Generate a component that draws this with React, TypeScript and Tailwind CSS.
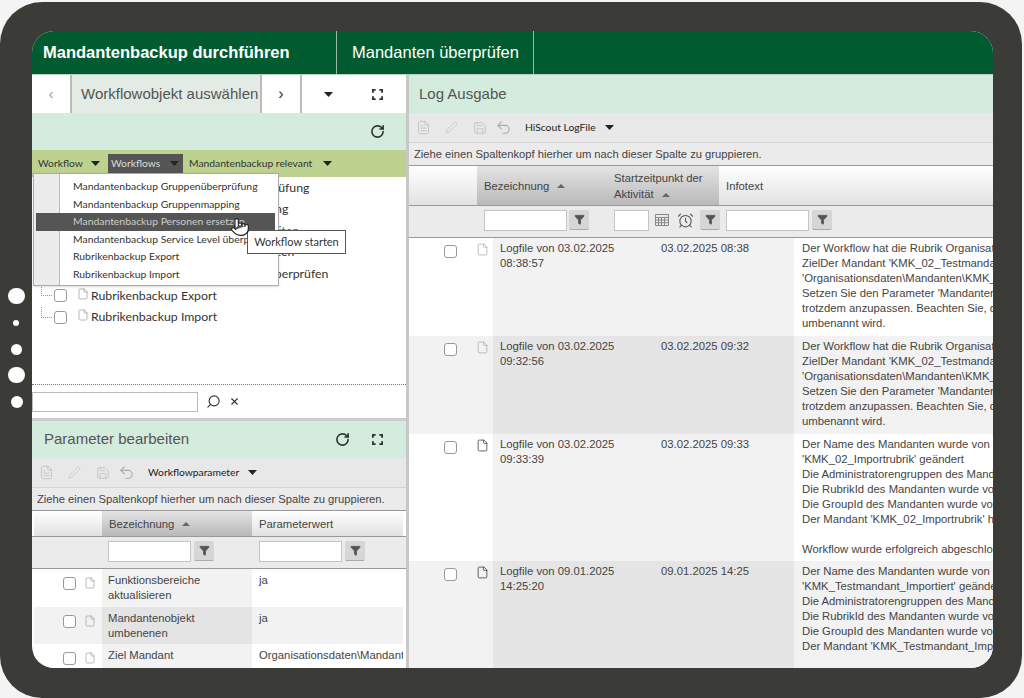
import { AlarmClock, File, FileText, Funnel, Pen, Pointer, RotateCw, Save, Search, Undo2, X } from "lucide-react"

const caret = (
  <svg width="9" height="5" viewBox="0 0 9 5" className="shrink-0">
    <path d="M0 0h9L4.5 5z" fill="#222" />
  </svg>
)

function SortUp() {
  return (
    <svg width="8" height="4" viewBox="0 0 8 4" className="ml-2 inline-block align-middle">
      <path d="M0 4h8L4 0z" fill="#666" />
    </svg>
  )
}

function Corners() {
  return (
    <svg width="11" height="11" viewBox="0 0 12 12" fill="none" stroke="#333" strokeWidth="2">
      <path d="M1 4V1h3M8 1h3v3M11 8v3H8M4 11H1V8" />
    </svg>
  )
}

function Check() {
  return <span className="block h-[13px] w-[13px] shrink-0 rounded-[3px] border border-[#999] bg-white" />
}

function FilterBtn() {
  return (
    <span className="flex h-[20px] w-[20px] shrink-0 items-center justify-center rounded-[2px] border-b border-[#aaa] bg-[#d6d6d6]">
      <Funnel size={11} fill="#555" stroke="#555" />
    </span>
  )
}

function FilterInput({ width }: { width: string }) {
  return <span className={`block h-[21px] ${width} shrink-0 border border-[#c4c4c4] bg-white`} />
}

function Toolbar({ label }: { label: string }) {
  return (
    <div className="flex h-[30px] shrink-0 items-center border-b border-[#d4d4d4] bg-[#e8e8e8] pl-[7px] text-[#c4c4c4]">
      <FileText size={15} strokeWidth={1.5} />
      <Pen size={13} strokeWidth={1.3} className="ml-[14px]" />
      <Save size={14} strokeWidth={1.5} className="ml-[15px]" />
      <Undo2 size={17} strokeWidth={1.5} className="ml-[8px] text-[#aaa]" />
      <span className="ml-[13px] font-['Lato',sans-serif] text-[10.3px] text-[#222]">{label}</span>
      <span className="ml-[9px]">{caret}</span>
    </div>
  )
}

function GroupHint() {
  return (
    <div className="flex h-[23px] shrink-0 items-center whitespace-nowrap border-b border-[#999] bg-[#ebebeb] pl-[5px] text-[11.2px] text-[#444]">
      Ziehe einen Spaltenkopf hierher um nach dieser Spalte zu gruppieren.
    </div>
  )
}

const headCell = "flex shrink-0 items-center bg-gradient-to-b from-white to-[#e2e2e2] pl-[7px] pt-[1px]"
const sortedCell = "flex shrink-0 items-center bg-gradient-to-b from-[#e4e4e4] to-[#b9b9b9] pl-[7px] pt-[1px]"

const treeNames = [
  "Mandantenbackup Gruppenüberprüfung",
  "Mandantenbackup Gruppenmapping",
  "Mandantenbackup Objekte bearbeiten",
  "Mandantenbackup Personen ersetzen",
  "Mandantenbackup Service Level überprüfen",
  "Rubrikenbackup Export",
  "Rubrikenbackup Import",
]

const menuItems = [
  "Mandantenbackup Gruppenüberprüfung",
  "Mandantenbackup Gruppenmapping",
  "Mandantenbackup Personen ersetzen",
  "Mandantenbackup Service Level überprüfen",
  "Rubrikenbackup Export",
  "Rubrikenbackup Import",
]

const paramRows = [
  { name: "Funktionsbereiche aktualisieren", value: "ja", height: "h-[38px]" },
  { name: "Mandantenobjekt umbenenen", value: "ja", height: "h-[37px]" },
  { name: "Ziel Mandant", value: "Organisationsdaten\\Mandanten", height: "h-[30px]" },
]

const workflowText = [
  "Der Workflow hat die Rubrik Organisationsdaten",
  "ZielDer Mandant 'KMK_02_Testmandant'",
  "'Organisationsdaten\\Mandanten\\KMK_02",
  "Setzen Sie den Parameter 'Mandantenobjekt",
  "trotzdem anzupassen. Beachten Sie, dass",
  "umbenannt wird.",
]

const logRows = [
  { title: "Logfile von 03.02.2025 08:38:57", date: "03.02.2025 08:38", dark: false, height: "h-[98px]", lines: workflowText },
  { title: "Logfile von 03.02.2025 09:32:56", date: "03.02.2025 09:32", dark: false, height: "h-[98px]", lines: workflowText },
  {
    title: "Logfile von 03.02.2025 09:33:39",
    date: "03.02.2025 09:33",
    dark: true,
    height: "h-[127px]",
    lines: [
      "Der Name des Mandanten wurde von 'KMK",
      "'KMK_02_Importrubrik' geändert",
      "Die Administratorengruppen des Mandanten",
      "Die RubrikId des Mandanten wurde von",
      "Die GroupId des Mandanten wurde von",
      "Der Mandant 'KMK_02_Importrubrik' hat",
      "\u00a0",
      "Workflow wurde erfolgreich abgeschlossen",
    ],
  },
  {
    title: "Logfile von 09.01.2025 14:25:20",
    date: "09.01.2025 14:25",
    dark: true,
    height: "h-[110px]",
    lines: [
      "Der Name des Mandanten wurde von 'KMK",
      "'KMK_Testmandant_Importiert' geändert",
      "Die Administratorengruppen des Mandanten",
      "Die RubrikId des Mandanten wurde von",
      "Die GroupId des Mandanten wurde von",
      "Der Mandant 'KMK_Testmandant_Importiert'",
    ],
  },
]

function WorkflowPane() {
  return (
    <div className="relative flex h-[343px] shrink-0 flex-col">
      <div className="flex h-[38px] shrink-0 items-stretch bg-white">
        <div className="flex w-[40px] items-center justify-center border-r-2 border-[#bbb] text-[15px] text-[#999]">‹</div>
        <div className="flex w-[190px] items-center whitespace-nowrap border-r-2 border-[#bbb] bg-[#e2ece4] pl-[9px] text-[15px] text-[#555]">
          Workflowobjekt auswählen
        </div>
        <div className="flex w-[40px] items-center justify-center border-r-2 border-[#bbb] text-[16px] text-[#333]">›</div>
        <div className="flex w-[52px] items-center justify-center">{caret}</div>
        <div className="flex w-[46px] items-center justify-center">
          <Corners />
        </div>
      </div>
      <div className="flex h-[37px] shrink-0 items-center justify-end bg-[#d3ecdd] pr-[21px]">
        <RotateCw size={15} strokeWidth={2.6} className="text-[#333]" />
      </div>
      <div className="flex h-[27px] shrink-0 items-center whitespace-nowrap bg-[#bdd28e] font-['Lato',sans-serif] text-[10.3px] text-[#333]">
        <span className="ml-[6px] w-[53px]">Workflow</span>
        {caret}
        <span className="ml-[8px] flex h-[19px] w-[75px] items-center bg-[#555] pl-[3px] text-[#ddd]">
          Workflows<span className="ml-auto mr-[4px]">{caret}</span>
        </span>
        <span className="ml-[6px] w-[134px]">Mandantenbackup relevant</span>
        {caret}
      </div>
      <div className="flex-1 bg-white font-['Lato',sans-serif] text-[12.3px] text-[#333]">
        {treeNames.map((name, i) => (
          <div key={name} className="flex h-[21.6px] items-center pl-[9px]">
            <span className="mr-[2px] h-[11px] w-[11px] shrink-0 -translate-y-[5px] border-b border-l border-dotted border-[#999]" />
            <Check />
            <File size={12} strokeWidth={1.4} className="ml-[10px] mr-[2px] shrink-0 -translate-y-[2px] text-[#999]" />
            <span className={i === 2 ? "whitespace-nowrap text-[#17864d]" : "whitespace-nowrap"}>{name}</span>
          </div>
        ))}
      </div>
      <div className="flex h-[34px] shrink-0 items-center border-t border-dotted border-[#777] bg-white">
        <span className="block h-[20px] w-[166px] border border-[#bbb] bg-white" />
        <Search size={15} strokeWidth={1.8} className="ml-[8px] -scale-x-100 text-[#333]" />
        <X size={11} strokeWidth={2.4} className="ml-[8px] text-[#333]" />
      </div>

      {/* dropdown over the tree */}
      <div className="absolute left-[1px] top-[98px] h-[113px] w-[246px] overflow-hidden whitespace-nowrap border border-[#aaa] bg-white font-['Lato',sans-serif] text-[10.4px] text-[#333] shadow-sm">
        <div className="absolute bottom-0 left-0 top-0 w-[26px] border-r border-[#bbb] bg-[#ececec]" />
        <div className="relative pt-[4px]">
          {menuItems.map((item, i) => (
            <div
              key={item}
              className={
                i === 2
                  ? "ml-[2px] mr-[3px] flex h-[17.6px] items-center bg-[#555] pl-[37px] text-[#ccc]"
                  : "ml-[2px] mr-[3px] flex h-[17.6px] items-center pl-[37px]"
              }
            >
              {item}
            </div>
          ))}
        </div>
      </div>
      <div className="absolute left-[215px] top-[155px] flex h-[24px] w-[99px] items-center justify-center border border-[#555] bg-white font-['Lato',sans-serif] text-[11px] text-[#333]">
        Workflow starten
      </div>
      <Pointer size={20} fill="white" stroke="#222" strokeWidth={1.4} className="absolute left-[198px] top-[142px]" />
    </div>
  )
}

function ParameterPane() {
  return (
    <div className="flex min-h-0 flex-1 flex-col border-t-[3px] border-[#ccc]">
      <div className="flex h-[37px] shrink-0 items-center bg-[#d3ecdd] pl-[12px] pr-[23px] text-[15px] text-[#555]">
        Parameter bearbeiten
        <RotateCw size={15} strokeWidth={2.6} className="ml-auto text-[#333]" />
        <span className="ml-[22px]">
          <Corners />
        </span>
      </div>
      <Toolbar label="Workflowparameter" />
      <GroupHint />
      <div className="flex h-[26px] shrink-0 border-b border-[#999] pl-[2px] text-[11.3px] text-[#444]">
        <div className={`${headCell} w-[68px]`} />
        <div className={`${sortedCell} w-[150px]`}>
          Bezeichnung
          <SortUp />
        </div>
        <div className={`${headCell} w-[151px]`}>Parameterwert</div>
      </div>
      <div className="flex h-[32px] shrink-0 items-center border-b border-[#999] bg-[#ebebeb] pb-[3px] pl-[76px]">
        <FilterInput width="w-[83px]" />
        <span className="ml-[3px]">
          <FilterBtn />
        </span>
        <span className="ml-[45px]">
          <FilterInput width="w-[83px]" />
        </span>
        <span className="ml-[3px]">
          <FilterBtn />
        </span>
      </div>
      {paramRows.map((row, i) => (
        <div key={row.name} className={`flex ${row.height} shrink-0 pl-[2px] text-[11.3px] leading-[15px] text-[#444]`}>
          <div className={`flex w-[68px] gap-[8px] pl-[29px] pt-[8px] ${i === 1 ? "bg-[#f2f2f2]" : "bg-white"}`}>
            <Check />
            <File size={12} strokeWidth={1.3} className="text-[#999]" />
          </div>
          <div className={`w-[150px] px-[6px] pt-[4px] ${i === 1 ? "bg-[#e4e4e4]" : "bg-[#f2f2f2]"}`}>{row.name}</div>
          <div className={`w-[151px] overflow-hidden whitespace-nowrap pl-[7px] pt-[4px] ${i === 1 ? "bg-[#f2f2f2]" : "bg-white"}`}>
            {row.value}
          </div>
        </div>
      ))}
    </div>
  )
}

function LogPane() {
  return (
    <div className="flex min-w-0 flex-1 flex-col overflow-hidden">
      <div className="flex h-[38px] shrink-0 items-center bg-[#d3ecdd] pl-[10px] text-[15px] text-[#555]">Log Ausgabe</div>
      <Toolbar label="HiScout LogFile" />
      <GroupHint />
      <div className="flex h-[40px] shrink-0 border-b border-[#999] text-[11.3px] leading-[16px] text-[#444]">
        <div className={`${headCell} w-[68px]`} />
        <div className={`${sortedCell} w-[130px]`}>
          Bezeichnung
          <SortUp />
        </div>
        <div className={`${sortedCell} w-[112px]`}>
          <span>
            Startzeitpunkt der
            <br />
            Aktivität
            <SortUp />
          </span>
        </div>
        <div className={`${headCell} flex-1`}>Infotext</div>
      </div>
      <div className="flex h-[32px] shrink-0 items-center border-b border-[#999] bg-[#ebebeb] pb-[3px] pl-[75px]">
        <FilterInput width="w-[83px]" />
        <span className="ml-[2px]">
          <FilterBtn />
        </span>
        <span className="ml-[25px]">
          <FilterInput width="w-[35px]" />
        </span>
        <svg width="14" height="12" viewBox="0 0 14 12" className="ml-[6px]" fill="none" stroke="#888">
          <path d="M.5.5h13v11H.5zM.5 3.5h13M.5 6h13M.5 8.7h13M3.5 3.5v8M6.5 3.5v8M9.5 3.5v8" />
        </svg>
        <AlarmClock size={17} strokeWidth={1.5} className="ml-[8px] text-[#555]" />
        <span className="ml-[6px]">
          <FilterBtn />
        </span>
        <span className="ml-[6px]">
          <FilterInput width="w-[83px]" />
        </span>
        <span className="ml-[3px]">
          <FilterBtn />
        </span>
      </div>
      {logRows.map((row, i) => (
        <div key={row.title} className={`flex ${row.height} shrink-0 text-[11.3px] leading-[15px] text-[#444]`}>
          <div className={`flex w-[84px] shrink-0 gap-[19px] pl-[35px] ${i % 2 ? "bg-[#f2f2f2]" : "bg-white"}`}>
            <span className="pt-[7px]">
              <Check />
            </span>
            <File size={13} strokeWidth={1.4} className={`mt-[5px] ${row.dark ? "text-[#333]" : "text-[#aaa]"}`} />
          </div>
          <div className={`flex w-[301px] shrink-0 pt-[3px] ${i % 2 ? "bg-[#e5e5e5]" : "bg-[#f2f2f2]"}`}>
            <div className="w-[168px] shrink-0 pl-[7px] pr-[36px]">{row.title}</div>
            <div>{row.date}</div>
          </div>
          <div className={`flex-1 overflow-hidden whitespace-nowrap pl-[8px] pt-[3px] ${i % 2 ? "bg-[#f2f2f2]" : "bg-white"}`}>
            {row.lines.map((line, j) => (
              <div key={j}>{line}</div>
            ))}
          </div>
        </div>
      ))}
    </div>
  )
}

export default function App() {
  return (
    <div className="relative h-[698px] w-[1024px] overflow-hidden bg-[#f4f4f4] pr-[2px] pt-[2px] font-['Liberation_Sans',Arial,sans-serif]">
      <div className="h-full w-full rounded-[42px] bg-[#3b3b37] pb-[30px] pl-[32px] pr-[29px] pt-[29px]">
        <div className="flex h-full w-full flex-col overflow-hidden rounded-[22px] bg-white">
          <div className="flex h-[44px] shrink-0 border-b border-[#b9cfc2] bg-[#005c30] text-[16.5px] text-white">
            <div className="flex w-[305px] items-center border-r border-[#9db8a8] pl-[11px] font-bold">Mandantenbackup durchführen</div>
            <div className="flex w-[197px] items-center border-r border-[#9db8a8] pl-[15px]">Mandanten überprüfen</div>
          </div>
          <div className="flex min-h-0 flex-1">
            <div className="flex w-[374px] shrink-0 flex-col overflow-hidden">
              <WorkflowPane />
              <ParameterPane />
            </div>
            <div className="w-[3px] shrink-0 bg-[#c8c8c8]" />
            <LogPane />
          </div>
        </div>
      </div>
      {/* punched holes in the frame */}
      <span className="absolute left-[8px] top-[288px] h-[16px] w-[17px] rounded-full bg-white" />
      <span className="absolute left-[13px] top-[320px] h-[6px] w-[6px] rounded-full bg-white" />
      <span className="absolute left-[11px] top-[344px] h-[11px] w-[11px] rounded-full bg-white" />
      <span className="absolute left-[8px] top-[367px] h-[16px] w-[17px] rounded-full bg-white" />
      <span className="absolute left-[11px] top-[396px] h-[12px] w-[12px] rounded-full bg-white" />
    </div>
  )
}
